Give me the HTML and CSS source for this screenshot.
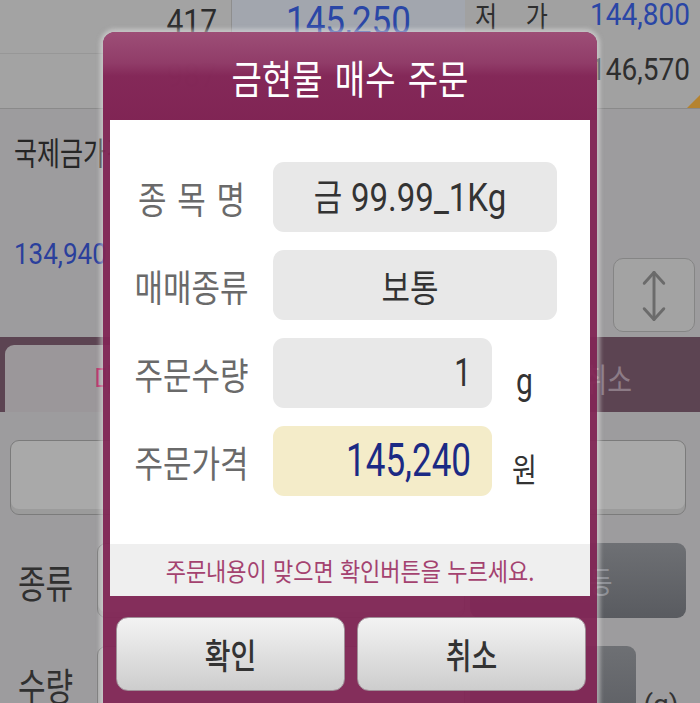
FILE: index.html
```html
<!DOCTYPE html>
<html lang="ko">
<head>
<meta charset="utf-8">
<title>금현물 매수 주문</title>
<link rel="stylesheet" href="styles.css">
</head>
<body>
<div class="screen">
  <div class="quote">
    <div class="q-row">
      <div class="q-cell qty"><span class="n">417</span></div>
      <div class="q-cell price"><span class="n big">145,250</span></div>
      <div class="q-cell side"><span class="t lbl">저 가</span><span class="n blue">144,800</span></div>
    </div>
    <div class="q-row">
      <div class="q-cell qty"><span class="n">987</span></div>
      <div class="q-cell price sel"><span class="n big">145,240</span></div>
      <div class="q-cell side"><span class="t lbl faint">기 준</span><span class="n">146,570</span><i class="corner"></i></div>
    </div>
  </div>

  <div class="intl">
    <div class="intl-info">
      <div class="intl-title"><span class="t">국제금가격</span></div>
      <div class="intl-value"><span class="n">134,940</span></div>
    </div>
    <div class="swap">
      <svg width="82" height="74" viewBox="0 0 82 74" aria-hidden="true">
        <line x1="41" y1="13" x2="41" y2="61" stroke="#6b6b6b" stroke-width="3" stroke-linecap="round"/>
        <polyline points="31,24 41,13 51,24" fill="none" stroke="#6b6b6b" stroke-width="3" stroke-linecap="round" stroke-linejoin="round"/>
        <polyline points="31,50 41,61 51,50" fill="none" stroke="#6b6b6b" stroke-width="3" stroke-linecap="round" stroke-linejoin="round"/>
      </svg>
    </div>
  </div>

  <div class="tabs">
    <div class="tab active"><span class="t">매수</span></div>
    <div class="tab"><span class="t">매도</span></div>
    <div class="tab"><span class="t">정정취소</span></div>
  </div>

  <div class="form">
    <div class="f-row first"><div class="field wide"></div></div>
    <div class="f-row">
      <span class="f-label"><span class="t">종류</span></span>
      <div class="field"></div>
      <div class="dark-btn"><span class="t">선택등</span></div>
    </div>
    <div class="f-row">
      <span class="f-label"><span class="t">수량</span></span>
      <div class="field"></div>
      <div class="dark-box"></div>
      <span class="f-unit">(g)</span>
    </div>
  </div>
</div>

<div class="dialog">
  <div class="dlg-head"><span class="t title">금현물 매수 주문</span></div>
  <div class="dlg-body">
    <div class="rows">
      <div class="row">
        <span class="label"><span class="t">종 목 명</span></span>
        <div class="box center"><span class="t">금 <span class="latin">99.99_1Kg</span></span></div>
      </div>
      <div class="row">
        <span class="label"><span class="t">매매종류</span></span>
        <div class="box center"><span class="t">보통</span></div>
      </div>
      <div class="row">
        <span class="label"><span class="t">주문수량</span></span>
        <div class="box short right"><span class="t latin qty-val">1</span></div>
        <span class="unit"><span class="t latin">g</span></span>
      </div>
      <div class="row">
        <span class="label"><span class="t">주문가격</span></span>
        <div class="box short right price-box"><span class="t latin price-val">145,240</span></div>
        <span class="unit"><span class="t">원</span></span>
      </div>
    </div>
    <div class="notice"><span class="t">주문내용이 맞으면 확인버튼을 누르세요.</span></div>
  </div>
  <div class="dlg-actions">
    <button class="btn"><span class="t">확인</span></button>
    <button class="btn"><span class="t">취소</span></button>
  </div>
</div>
</body>
</html>
```

FILE: styles.css
```css
* { box-sizing: border-box; margin: 0; padding: 0; }

html, body {
  width: 700px;
  height: 703px;
  overflow: hidden;
}

body {
  position: relative;
  background: #9d9c9e;
  font-family: "Noto Sans CJK KR", "Noto Sans", sans-serif;
  color: #2e2e2e;
}

.t {
  display: inline-block;
  transform: scaleY(1.2);
  line-height: 1;
  white-space: pre;
}

.n {
  display: inline-block;
  font-family: Roboto, "Noto Sans CJK KR", sans-serif;
  transform: scaleY(1.12);
  line-height: 1;
}

.latin { font-family: Roboto, "Noto Sans CJK KR", sans-serif; }

/* ---------- background screen ---------- */
.screen {
  width: 700px;
  height: 703px;
  display: flex;
  flex-direction: column;
}

.quote {
  height: 109px;
  border-bottom: 1px solid #8a8a8a;
  display: flex;
  flex-direction: column;
  flex-shrink: 0;
}

.q-row { display: flex; height: 54px; }

.q-cell { display: flex; align-items: center; font-size: 30px; }

.q-cell.qty {
  width: 232px;
  justify-content: flex-end;
  padding-right: 14px;
  padding-bottom: 10px;
  background: #a3a3a3;
  border-right: 1px solid #8e8e8e;
  color: #2c2c2c;
}

.q-row:first-child .qty { border-bottom: 1px solid #979797; }

.q-cell.price {
  width: 233px;
  justify-content: center;
  padding-bottom: 12px;
  color: #2a46a6;
  background: #a2a6ae;
}

.n.big { font-size: 35px; }

.q-cell.price.sel { background: #8c8b91; color: #7a7a90; }

.q-cell.side {
  flex: 1;
  justify-content: space-between;
  padding: 0 10px 24px 10px;
  background: #a1a1a1;
  position: relative;
  font-size: 28px;
}

.q-row:last-child .side { padding-bottom: 22px; }

.lbl { font-size: 24px; word-spacing: 22px; color: #2e2e2e; }
.lbl.faint { color: #8a8a8a; }
.blue { color: #2a46a6; }

.corner {
  position: absolute;
  right: 0;
  bottom: 0;
  width: 0;
  height: 0;
  border-left: 13px solid transparent;
  border-bottom: 13px solid #b5832f;
}

.intl {
  height: 228px;
  flex-shrink: 0;
  display: flex;
  justify-content: space-between;
  align-items: flex-end;
  padding: 0 5px 5px 14px;
}

.intl-info {
  align-self: stretch;
  display: flex;
  flex-direction: column;
}

.intl-title {
  margin-top: 24px;
  font-size: 25px;
  color: #262626;
}

.intl-title .t { transform: scaleY(1.28); }

.intl-value {
  margin-top: 64px;
  font-size: 26px;
  color: #2a3f9c;
}

.swap {
  width: 82px;
  height: 74px;
  border: 1.5px solid #858585;
  border-radius: 10px;
  background: #a3a3a3;
  display: flex;
}

.tabs {
  height: 75px;
  flex-shrink: 0;
  background: #5c4452;
  padding: 8px 0 0 5px;
  display: flex;
}

.tab {
  width: 233px;
  display: flex;
  align-items: center;
  justify-content: center;
  font-size: 27px;
  color: #8c7b86;
}

.tab.active {
  width: 228px;
  background: #9b979a;
  border-radius: 9px 9px 0 0;
  color: #b8306a;
}

.form {
  flex: 1;
  background: #9d9c9e;
  display: flex;
  flex-direction: column;
  padding: 28px 14px 0 10px;
  gap: 28px;
}

.f-row {
  display: flex;
  align-items: center;
  height: 75px;
  flex-shrink: 0;
}

.f-label {
  width: 87px;
  padding-left: 8px;
  font-size: 30px;
  color: #303030;
}

.f-label .t { transform: scaleY(1.28); }

.field {
  height: 75px;
  flex: 1;
  background: #a9a9a9;
  border: 1px solid #7b7b7b;
  border-radius: 9px;
  box-shadow: inset 0 -5px 0 rgba(0, 0, 0, 0.08);
}

.field.wide { flex: 1; }

.dark-btn {
  width: 216px;
  height: 75px;
  margin-left: 5px;
  border-radius: 9px;
  background: linear-gradient(#6e7074, #595b60);
  display: flex;
  align-items: center;
  justify-content: center;
  font-size: 25px;
  color: #8e9096;
}

.dark-box {
  width: 166px;
  height: 75px;
  margin-left: 5px;
  border-radius: 9px;
  background: linear-gradient(#6e7074, #5d5f64);
  align-self: flex-start;
}

.f-unit {
  width: 50px;
  align-self: flex-end;
  text-align: center;
  font-family: Roboto, sans-serif;
  font-size: 28px;
  color: #333;
}

/* ---------- dialog ---------- */
.dialog {
  position: absolute;
  left: 103px;
  top: 32px;
  width: 494px;
  height: 684px;
  border-radius: 12px 12px 0 0;
  background: rgba(130, 38, 86, 0.94);
  box-shadow: 0 0 4px 3px rgba(225, 225, 225, 0.55);
  display: flex;
  flex-direction: column;
}

.dlg-head {
  height: 88px;
  flex-shrink: 0;
  border-radius: 12px 12px 0 0;
  background: linear-gradient(rgba(160, 82, 122, 0.9) 0%, rgba(146, 62, 106, 0.9) 35%, rgba(132, 40, 88, 0.9) 50%, rgba(128, 36, 84, 0.92) 100%);
  display: flex;
  align-items: center;
  justify-content: center;
  padding-top: 2px;
}

.title {
  font-size: 33px;
  color: #ffffff;
  word-spacing: 3px;
  transform: scaleY(1.2);
}

.dlg-body {
  margin: 0 7px;
  background: #ffffff;
  display: flex;
  flex-direction: column;
}

.rows {
  display: flex;
  flex-direction: column;
  gap: 18px;
  padding: 42px 33px 48px 0;
}

.row {
  display: flex;
  align-items: center;
  height: 70px;
}

.label {
  width: 163px;
  text-align: center;
  font-size: 31px;
  color: #6a6a6a;
}

.label .t { word-spacing: 2px; }

.box {
  height: 70px;
  flex: 1;
  border-radius: 11px;
  background: #e8e8e8;
  display: flex;
  align-items: center;
  font-size: 31px;
  color: #333;
}

.box .latin { font-size: 33px; }

.box.center { justify-content: center; padding-right: 10px; }

.box.short { flex: 0 0 219px; }

.box.right { justify-content: flex-end; padding-right: 21px; }

.qty-val { font-size: 30px; transform: scaleY(1.28); }

.price-box { background: #f4ecc9; }

.price-val { color: #1b2a84; transform: scaleY(1.3); }

.box .latin.price-val { font-size: 35px; }

.box .latin.qty-val { font-size: 30px; }

.unit {
  width: 65px;
  text-align: center;
  font-size: 27px;
  color: #333;
  padding-top: 14px;
}

.unit .latin { font-size: 30px; }

.notice {
  height: 52px;
  background: #efefef;
  display: flex;
  align-items: center;
  justify-content: center;
  font-size: 22px;
  color: #a4426f;
}

.notice .t { transform: scaleY(1.12); }

.dlg-actions {
  display: flex;
  gap: 12px;
  padding: 21px 11px 0 13px;
}

.btn {
  width: 229px;
  height: 74px;
  border: 1px solid #a08f98;
  border-radius: 12px;
  background: linear-gradient(#f3f3f3 0%, #e2e2e2 45%, #cdcdcd 100%);
  font-family: "Noto Sans CJK KR", sans-serif;
  font-size: 28px;
  font-weight: 500;
  color: #333;
  display: flex;
  align-items: center;
  justify-content: center;
}

.btn .t { transform: scaleY(1.25); }
```
